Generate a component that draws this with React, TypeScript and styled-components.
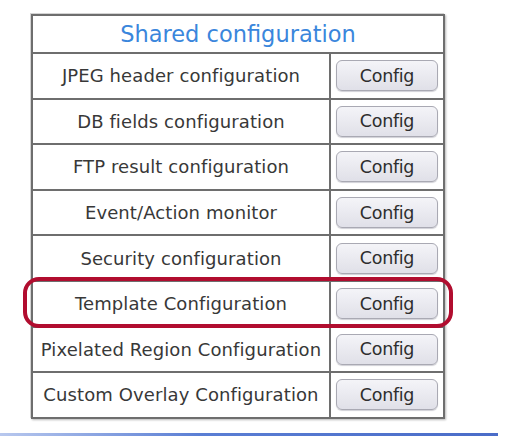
import React from 'react'
import styled, { createGlobalStyle } from 'styled-components'

const GlobalStyle = createGlobalStyle`
  html, body {
    margin: 0;
    padding: 0;
    background: #ffffff;
  }
  body {
    font-family: 'DejaVu Sans', Verdana, sans-serif;
  }
`

const Page = styled.div`
  width: 508px;
  height: 446px;
  padding-top: 14px;
  box-sizing: border-box;
`

const Frame = styled.div`
  position: relative;
  margin-left: 31px;
  width: 412px;
`

const Table = styled.table`
  width: 412px;
  border-collapse: collapse;
  border: 2px solid #6e6e6e;
  box-shadow: -1px -1px 0 #d4d4d4, 1px 1px 2px #b8b8b8;
  table-layout: fixed;
`

const Col = styled.col<{ $w: number }>`
  width: ${(p) => p.$w}px;
`

const HeaderCell = styled.th`
  height: 36px;
  padding: 0;
  border: 2px solid #6e6e6e;
  color: #3a86dc;
  font-weight: normal;
  font-size: 22.5px;
  text-align: center;
`

const LabelCell = styled.td`
  height: 43.6px;
  padding: 0;
  border: 2px solid #6e6e6e;
  color: #383838;
  font-size: 18px;
  letter-spacing: 0.1px;
  text-align: center;
  white-space: nowrap;
`

const ButtonCell = styled.td`
  padding: 0;
  border: 2px solid #6e6e6e;
  text-align: center;
`

const ConfigButton = styled.button`
  width: 102px;
  height: 31px;
  border: 1px solid #a9a9b3;
  border-radius: 6px;
  background: linear-gradient(#f4f4f8, #e0e0e8);
  box-shadow: 0 1px 1px #d0d0d6;
  font-family: 'DejaVu Sans', Verdana, sans-serif;
  font-size: 17.5px;
  letter-spacing: -0.3px;
  color: #2e2e2e;
  padding: 0;
  cursor: pointer;
`

const Highlight = styled.div`
  position: absolute;
  left: -8px;
  top: 263px;
  width: 430px;
  height: 51px;
  box-sizing: border-box;
  border: 4.5px solid #b10d2f;
  border-radius: 16px;
  pointer-events: none;
`

const Rule = styled.div`
  margin-top: 14px;
  width: 498px;
  height: 3px;
  background: linear-gradient(90deg, #b8c8ee, #5a7ed4 40%, #4a6cc8);
`

const rows = [
  'JPEG header configuration',
  'DB fields configuration',
  'FTP result configuration',
  'Event/Action monitor',
  'Security configuration',
  'Template Configuration',
  'Pixelated Region Configuration',
  'Custom Overlay Configuration',
]

export default function App() {
  return (
    <>
      <GlobalStyle />
      <Page>
        <Frame>
          <Table>
            <colgroup>
              <Col $w={298} />
              <Col $w={114} />
            </colgroup>
            <thead>
              <tr>
                <HeaderCell colSpan={2}>Shared configuration</HeaderCell>
              </tr>
            </thead>
            <tbody>
              {rows.map((label) => (
                <tr key={label}>
                  <LabelCell>{label}</LabelCell>
                  <ButtonCell>
                    <ConfigButton type="button">Config</ConfigButton>
                  </ButtonCell>
                </tr>
              ))}
            </tbody>
          </Table>
          <Highlight />
        </Frame>
        <Rule />
      </Page>
    </>
  )
}
